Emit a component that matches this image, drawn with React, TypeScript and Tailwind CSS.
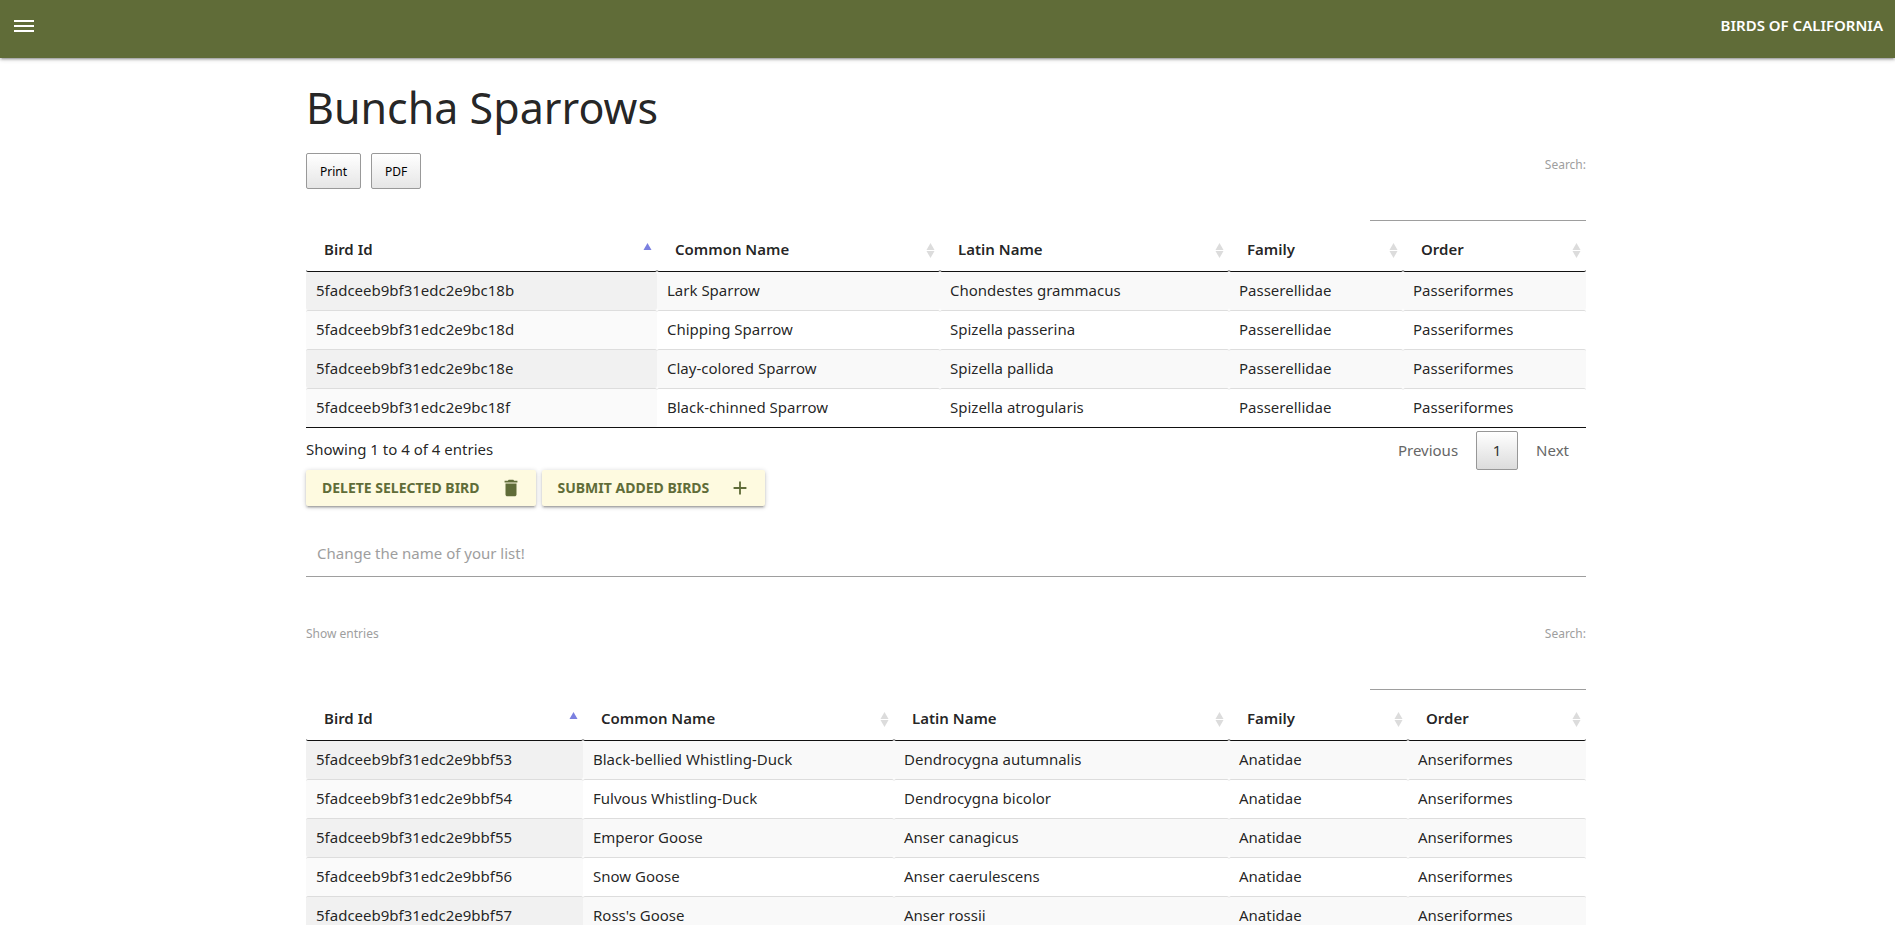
import React from "react";

type Bird = { id: string; common: string; latin: string; family: string; order: string };

const listBirds: Bird[] = [
  { id: "5fadceeb9bf31edc2e9bc18b", common: "Lark Sparrow", latin: "Chondestes grammacus", family: "Passerellidae", order: "Passeriformes" },
  { id: "5fadceeb9bf31edc2e9bc18d", common: "Chipping Sparrow", latin: "Spizella passerina", family: "Passerellidae", order: "Passeriformes" },
  { id: "5fadceeb9bf31edc2e9bc18e", common: "Clay-colored Sparrow", latin: "Spizella pallida", family: "Passerellidae", order: "Passeriformes" },
  { id: "5fadceeb9bf31edc2e9bc18f", common: "Black-chinned Sparrow", latin: "Spizella atrogularis", family: "Passerellidae", order: "Passeriformes" },
];

const allBirds: Bird[] = [
  { id: "5fadceeb9bf31edc2e9bbf53", common: "Black-bellied Whistling-Duck", latin: "Dendrocygna autumnalis", family: "Anatidae", order: "Anseriformes" },
  { id: "5fadceeb9bf31edc2e9bbf54", common: "Fulvous Whistling-Duck", latin: "Dendrocygna bicolor", family: "Anatidae", order: "Anseriformes" },
  { id: "5fadceeb9bf31edc2e9bbf55", common: "Emperor Goose", latin: "Anser canagicus", family: "Anatidae", order: "Anseriformes" },
  { id: "5fadceeb9bf31edc2e9bbf56", common: "Snow Goose", latin: "Anser caerulescens", family: "Anatidae", order: "Anseriformes" },
  { id: "5fadceeb9bf31edc2e9bbf57", common: "Ross's Goose", latin: "Anser rossii", family: "Anatidae", order: "Anseriformes" },
];

const headings = ["Bird Id", "Common Name", "Latin Name", "Family", "Order"];
const listColumns = ["w-[351px]", "w-[283px]", "w-[289px]", "w-[174px]", "w-[183px]"];
const allColumns = ["w-[277px]", "w-[311px]", "w-[335px]", "w-[179px]", "w-[178px]"];

function SortIcon({ active }: { active: boolean }) {
  return (
    <svg width="9" height="15" viewBox="0 0 9 15" aria-hidden="true">
      <path d="M4.5 0 8.5 7h-8z" fill={active ? "#7b80e0" : "#dcdcdc"} />
      {!active && <path d="M.5 8h8l-4 7z" fill="#dcdcdc" />}
    </svg>
  );
}

function BirdTable({ birds, columns, closed }: { birds: Bird[]; columns: string[]; closed: boolean }) {
  return (
    <table className={`w-full table-fixed border-separate border-spacing-0 text-left text-[15px] leading-[22px] ${closed ? "border-b border-[#111]" : ""}`}>
      <colgroup>
        {columns.map((width, i) => (
          <col key={i} className={width} />
        ))}
      </colgroup>
      <thead>
        <tr>
          {headings.map((heading, i) => (
            <th key={heading} className="rounded-[2px] border-b border-[#111] p-0 font-semibold">
              <button type="button" className="flex h-[42px] w-full items-center justify-between pr-[5px] pl-[18px]">
                <span className="pb-[2px]">{heading}</span>
                <SortIcon active={i === 0} />
              </button>
            </th>
          ))}
        </tr>
      </thead>
      <tbody>
        {birds.map((bird, row) => {
          const line = row === 0 ? "" : "border-t border-[#ddd]";
          const size = row === 0 ? "h-[38px]" : "h-[39px]";
          const odd = row % 2 === 0;
          const cell = `rounded-[2px] px-[10px] pt-0 pb-[2px] ${size} ${line}`;
          return (
            <tr key={bird.id} className={odd ? "bg-[#f9f9f9]" : "bg-white"}>
              <td className={`${cell} ${odd ? "bg-[#f1f1f1]" : "bg-[#fafafa]"}`}>{bird.id}</td>
              <td className={cell}>{bird.common}</td>
              <td className={cell}>{bird.latin}</td>
              <td className={cell}>{bird.family}</td>
              <td className={cell}>{bird.order}</td>
            </tr>
          );
        })}
      </tbody>
    </table>
  );
}

function SearchField() {
  return (
    <label className="flex w-[216px] flex-col text-right text-[12px] leading-[24px] text-[#9e9e9e]">
      Search:
      <input type="search" className="h-[44px] w-full appearance-none border-b border-[#9e9e9e] bg-transparent text-[15px] text-black/85 outline-none" />
    </label>
  );
}

const toolButton =
  "h-[36px] rounded-[2px] border border-[#999] bg-linear-to-b from-white to-[#e6e6e6] px-[13px] pt-[2px] text-[12px] leading-[20px] text-black";
const actionButton =
  "flex h-[36px] items-center gap-[20px] rounded-[2px] bg-[#fefae0] pr-[14px] pl-[16px] text-[14px] font-bold text-[#606c38] shadow-[0_2px_2px_0_rgba(0,0,0,0.14),0_3px_1px_-2px_rgba(0,0,0,0.12),0_1px_5px_0_rgba(0,0,0,0.2)]";

export default function App() {
  return (
    <div className="h-screen overflow-y-auto bg-white font-['Noto_Sans','Open_Sans',sans-serif] text-[15px] leading-[22px] text-black/87 [scrollbar-width:none]">
      <nav className="flex h-[58px] items-start justify-between bg-[#606c38] px-[12px] pt-[14px] text-white shadow-[0_2px_2px_0_rgba(0,0,0,0.14),0_3px_1px_-2px_rgba(0,0,0,0.12),0_1px_5px_0_rgba(0,0,0,0.2)]">
        <button type="button" aria-label="Menu">
          <svg width="24" height="24" viewBox="0 0 24 24" fill="currentColor">
            <path d="M2 18h20v-2H2v2zm0-5h20v-2H2v2zm0-7v2h20V6H2z" />
          </svg>
        </button>
        <a href="#" className="font-semibold">BIRDS OF CALIFORNIA</a>
      </nav>

      <main className="mr-[3px]">
        <div className="mx-auto max-w-[1280px]">
          <h1 className="pt-[20px] text-[43px] leading-[60px]">Buncha Sparrows</h1>

          <div className="mt-[15px] flex h-[76px] items-start justify-between">
            <div className="flex gap-[10px]">
              <button type="button" className={toolButton}>Print</button>
              <button type="button" className={toolButton}>PDF</button>
            </div>
            <SearchField />
          </div>
          <BirdTable birds={listBirds} columns={listColumns} closed />

          <div className="flex items-start justify-between">
            <p className="pt-[10px]">Showing 1 to 4 of 4 entries</p>
            <div className="flex items-center pt-[3px] text-[#666]">
              <button type="button" className="px-[18px] pb-[2px]">Previous</button>
              <button type="button" className="h-[39px] w-[42px] rounded-[2px] border border-[#979797] bg-linear-to-b from-white to-[#dcdcdc] pb-[2px] text-[#333]">1</button>
              <button type="button" className="pr-[17px] pb-[2px] pl-[18px]">Next</button>
            </div>
          </div>

          <div className="flex gap-[6px]">
            <button type="button" className={actionButton}>
              DELETE SELECTED BIRD
              <svg width="22" height="22" viewBox="0 0 24 24" fill="currentColor" aria-hidden="true">
                <path d="M6 19c0 1.1.9 2 2 2h8c1.1 0 2-.9 2-2V7H6v12zM19 4h-3.5l-1-1h-5l-1 1H5v2h14V4z" />
              </svg>
            </button>
            <button type="button" className={actionButton}>
              SUBMIT ADDED BIRDS
              <svg width="22" height="22" viewBox="0 0 24 24" fill="currentColor" aria-hidden="true">
                <path d="M19 13h-6v6h-2v-6H5v-2h6V5h2v6h6v2z" />
              </svg>
            </button>
          </div>

          <input
            type="text"
            aria-label="List name"
            placeholder="Change the name of your list!"
            className="mt-[23px] h-[48px] w-full border-b border-[#9e9e9e] bg-transparent px-[11px] text-[15px] outline-none placeholder:text-[#9e9e9e]"
          />

          <div className="mt-[45px] flex h-[76px] items-start justify-between">
            <span className="text-[12px] leading-[24px] text-[#9e9e9e]">Show entries</span>
            <SearchField />
          </div>
          <BirdTable birds={allBirds} columns={allColumns} closed={false} />
        </div>
      </main>
    </div>
  );
}
